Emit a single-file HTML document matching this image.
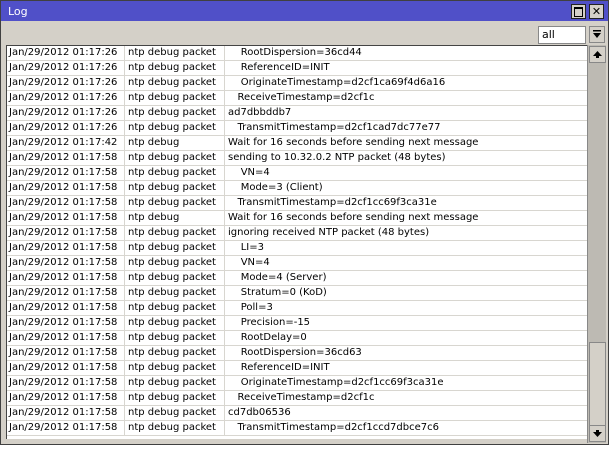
<!DOCTYPE html><html><head><style>
body{margin:0;width:609px;height:449px;background:#fff;overflow:hidden;font-family:"DejaVu Sans",sans-serif;font-size:10px;}
.win{position:absolute;left:0;top:0;width:607px;height:443px;border:1px solid #404040;background:#d4d0c8;}
.title{position:absolute;left:0;top:0;width:607px;height:20px;background:#5050c8;color:#fff;}
.title span{position:absolute;left:7px;top:4px;font-size:11px;}
.tb{position:absolute;top:3px;width:13px;height:13px;background:#d4d0c8;border:1px solid #222;font-size:11px;line-height:13px;text-align:center;color:#000;font-weight:bold;}
.sel{position:absolute;left:537px;top:25px;width:46px;height:16px;background:#fff;border:1px solid #888;font-size:11px;}
.sel span{position:absolute;left:3px;top:1px;}
.dd{position:absolute;left:588px;top:25px;width:14px;height:15px;background:#d4d0c8;border:1px solid #888;}
.grid{position:absolute;left:5px;top:44px;width:581px;height:393px;background:#fff;border-top:1px solid #444;border-left:1px solid #444;overflow:hidden;}
.r{height:14px;border-bottom:1px solid #d8d6d0;position:relative;white-space:pre;line-height:14px;}
.r span{position:absolute;top:0;}
.c1{left:2px}.c2{left:117px;border-left:1px solid #d8d6d0;padding-left:3px;height:15px}.c3{left:217px;border-left:1px solid #d8d6d0;padding-left:3px;height:15px}
.sb{position:absolute;left:586px;top:44px;width:18px;height:398px;background:#bdbab3;border-left:1px solid #888;}
.btn{position:absolute;left:1px;width:15px;height:15px;background:#d4d0c8;border:1px solid #888;}
.thumb{position:absolute;left:1px;top:297px;width:15px;height:82px;background:#d4d0c8;border:1px solid #888;}
</style></head><body>
<div class="win">
<div class="title"><span>Log</span>
<div class="tb" style="left:570px"><div style="position:absolute;left:2px;top:2px;width:7px;height:7px;border:1px solid #000;border-top-width:2px"></div></div>
<div class="tb" style="left:588px">✕</div></div>
<div class="sel"><span>all</span></div>
<div class="dd"><svg width="14" height="15"><rect x="3" y="3" width="8" height="1.5"/><path d="M3 6h8l-4 5z"/></svg></div>
<div class="grid">
<div class="r"><span class="c1">Jan/29/2012 01:17:26</span><span class="c2">ntp debug packet</span><span class="c3">    RootDispersion=36cd44</span></div>
<div class="r"><span class="c1">Jan/29/2012 01:17:26</span><span class="c2">ntp debug packet</span><span class="c3">    ReferenceID=INIT</span></div>
<div class="r"><span class="c1">Jan/29/2012 01:17:26</span><span class="c2">ntp debug packet</span><span class="c3">    OriginateTimestamp=d2cf1ca69f4d6a16</span></div>
<div class="r"><span class="c1">Jan/29/2012 01:17:26</span><span class="c2">ntp debug packet</span><span class="c3">   ReceiveTimestamp=d2cf1c</span></div>
<div class="r"><span class="c1">Jan/29/2012 01:17:26</span><span class="c2">ntp debug packet</span><span class="c3">ad7dbbddb7</span></div>
<div class="r"><span class="c1">Jan/29/2012 01:17:26</span><span class="c2">ntp debug packet</span><span class="c3">   TransmitTimestamp=d2cf1cad7dc77e77</span></div>
<div class="r"><span class="c1">Jan/29/2012 01:17:42</span><span class="c2">ntp debug</span><span class="c3">Wait for 16 seconds before sending next message</span></div>
<div class="r"><span class="c1">Jan/29/2012 01:17:58</span><span class="c2">ntp debug packet</span><span class="c3">sending to 10.32.0.2 NTP packet (48 bytes)</span></div>
<div class="r"><span class="c1">Jan/29/2012 01:17:58</span><span class="c2">ntp debug packet</span><span class="c3">    VN=4</span></div>
<div class="r"><span class="c1">Jan/29/2012 01:17:58</span><span class="c2">ntp debug packet</span><span class="c3">    Mode=3 (Client)</span></div>
<div class="r"><span class="c1">Jan/29/2012 01:17:58</span><span class="c2">ntp debug packet</span><span class="c3">   TransmitTimestamp=d2cf1cc69f3ca31e</span></div>
<div class="r"><span class="c1">Jan/29/2012 01:17:58</span><span class="c2">ntp debug</span><span class="c3">Wait for 16 seconds before sending next message</span></div>
<div class="r"><span class="c1">Jan/29/2012 01:17:58</span><span class="c2">ntp debug packet</span><span class="c3">ignoring received NTP packet (48 bytes)</span></div>
<div class="r"><span class="c1">Jan/29/2012 01:17:58</span><span class="c2">ntp debug packet</span><span class="c3">    LI=3</span></div>
<div class="r"><span class="c1">Jan/29/2012 01:17:58</span><span class="c2">ntp debug packet</span><span class="c3">    VN=4</span></div>
<div class="r"><span class="c1">Jan/29/2012 01:17:58</span><span class="c2">ntp debug packet</span><span class="c3">    Mode=4 (Server)</span></div>
<div class="r"><span class="c1">Jan/29/2012 01:17:58</span><span class="c2">ntp debug packet</span><span class="c3">    Stratum=0 (KoD)</span></div>
<div class="r"><span class="c1">Jan/29/2012 01:17:58</span><span class="c2">ntp debug packet</span><span class="c3">    Poll=3</span></div>
<div class="r"><span class="c1">Jan/29/2012 01:17:58</span><span class="c2">ntp debug packet</span><span class="c3">    Precision=-15</span></div>
<div class="r"><span class="c1">Jan/29/2012 01:17:58</span><span class="c2">ntp debug packet</span><span class="c3">    RootDelay=0</span></div>
<div class="r"><span class="c1">Jan/29/2012 01:17:58</span><span class="c2">ntp debug packet</span><span class="c3">    RootDispersion=36cd63</span></div>
<div class="r"><span class="c1">Jan/29/2012 01:17:58</span><span class="c2">ntp debug packet</span><span class="c3">    ReferenceID=INIT</span></div>
<div class="r"><span class="c1">Jan/29/2012 01:17:58</span><span class="c2">ntp debug packet</span><span class="c3">    OriginateTimestamp=d2cf1cc69f3ca31e</span></div>
<div class="r"><span class="c1">Jan/29/2012 01:17:58</span><span class="c2">ntp debug packet</span><span class="c3">   ReceiveTimestamp=d2cf1c</span></div>
<div class="r"><span class="c1">Jan/29/2012 01:17:58</span><span class="c2">ntp debug packet</span><span class="c3">cd7db06536</span></div>
<div class="r"><span class="c1">Jan/29/2012 01:17:58</span><span class="c2">ntp debug packet</span><span class="c3">   TransmitTimestamp=d2cf1ccd7dbce7c6</span></div>
</div>
<div class="sb">
<div class="btn" style="top:1px"><svg width="15" height="15"><path d="M3 9h9l-4.5-5z"/><rect x="6" y="9" width="3" height="2"/></svg></div>
<div class="thumb"></div>
<div class="btn" style="top:380px"><svg width="15" height="15"><rect x="6" y="4" width="3" height="2"/><path d="M3 6h9l-4.5 5z"/></svg></div>
</div>
</div>
</body></html>
